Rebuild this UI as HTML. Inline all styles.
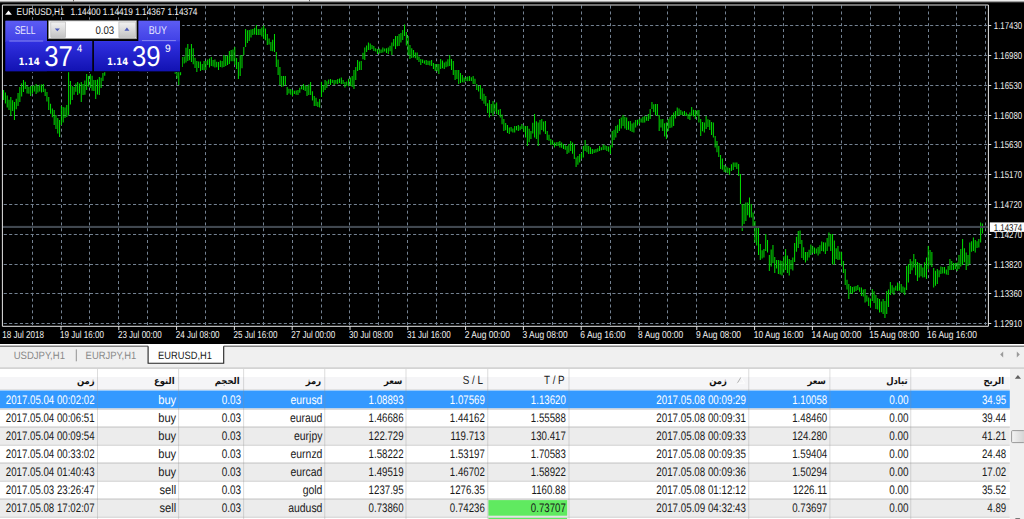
<!DOCTYPE html>
<html><head><meta charset="utf-8"><title>EURUSD,H1</title>
<style>html,body{margin:0;padding:0;background:#fff;overflow:hidden}svg{display:block}text{white-space:pre;text-rendering:geometricPrecision}</style></head><body>
<svg width="1024" height="519" viewBox="0 0 1024 519">
<defs>
<linearGradient id="gb" gradientUnits="userSpaceOnUse" x1="0" y1="20.8" x2="0" y2="71.2"><stop offset="0" stop-color="#5c5cf4"/><stop offset="0.39" stop-color="#4242e6"/><stop offset="0.42" stop-color="#3030e0"/><stop offset="1" stop-color="#1212b2"/></linearGradient>
<linearGradient id="gs" x1="0" y1="0" x2="0" y2="1"><stop offset="0" stop-color="#f2f2f2"/><stop offset="1" stop-color="#c4c4c4"/></linearGradient>
<linearGradient id="gt" x1="0" y1="0" x2="1" y2="0"><stop offset="0" stop-color="#f4f4f4"/><stop offset="1" stop-color="#d4d4d4"/></linearGradient>
</defs>
<rect x="0" y="0" width="1024" height="519" fill="#ffffff"/>
<rect x="0" y="1" width="1024" height="343" fill="#000"/>
<rect x="0" y="0" width="1024" height="1.1" fill="#ececec"/>
<rect x="0" y="1" width="1024" height="1" fill="#a0a0a0"/>
<rect x="0" y="2" width="1024" height="1" fill="#303030"/>
<rect x="73" y="0" width="1" height="1.4" fill="#666"/>
<rect x="309" y="0" width="1" height="1.4" fill="#666"/>
<g stroke="#748292" stroke-width="1" fill="none">
<path stroke-dasharray="3 2.86" d="M32.5 5.6V326"/>
<path stroke-dasharray="3 2.86" d="M61.5 5.6V326"/>
<path stroke-dasharray="3 2.86" d="M89.5 5.6V326"/>
<path stroke-dasharray="3 2.86" d="M118.5 5.6V326"/>
<path stroke-dasharray="3 2.86" d="M147.5 5.6V326"/>
<path stroke-dasharray="3 2.86" d="M176.5 5.6V326"/>
<path stroke-dasharray="3 2.86" d="M205.5 5.6V326"/>
<path stroke-dasharray="3 2.86" d="M234.5 5.6V326"/>
<path stroke-dasharray="3 2.86" d="M263.5 5.6V326"/>
<path stroke-dasharray="3 2.86" d="M292.5 5.6V326"/>
<path stroke-dasharray="3 2.86" d="M321.5 5.6V326"/>
<path stroke-dasharray="3 2.86" d="M349.5 5.6V326"/>
<path stroke-dasharray="3 2.86" d="M378.5 5.6V326"/>
<path stroke-dasharray="3 2.86" d="M407.5 5.6V326"/>
<path stroke-dasharray="3 2.86" d="M436.5 5.6V326"/>
<path stroke-dasharray="3 2.86" d="M465.5 5.6V326"/>
<path stroke-dasharray="3 2.86" d="M494.5 5.6V326"/>
<path stroke-dasharray="3 2.86" d="M523.5 5.6V326"/>
<path stroke-dasharray="3 2.86" d="M552.5 5.6V326"/>
<path stroke-dasharray="3 2.86" d="M581.5 5.6V326"/>
<path stroke-dasharray="3 2.86" d="M610.5 5.6V326"/>
<path stroke-dasharray="3 2.86" d="M639.5 5.6V326"/>
<path stroke-dasharray="3 2.86" d="M667.5 5.6V326"/>
<path stroke-dasharray="3 2.86" d="M696.5 5.6V326"/>
<path stroke-dasharray="3 2.86" d="M725.5 5.6V326"/>
<path stroke-dasharray="3 2.86" d="M754.5 5.6V326"/>
<path stroke-dasharray="3 2.86" d="M783.5 5.6V326"/>
<path stroke-dasharray="3 2.86" d="M812.5 5.6V326"/>
<path stroke-dasharray="3 2.86" d="M841.5 5.6V326"/>
<path stroke-dasharray="3 2.86" d="M870.5 5.6V326"/>
<path stroke-dasharray="3 2.86" d="M899.5 5.6V326"/>
<path stroke-dasharray="3 2.86" d="M928.5 5.6V326"/>
<path stroke-dasharray="3 2.86" d="M956.5 5.6V326"/>
<path stroke-dasharray="3 2.86" d="M985.5 5.6V326"/>
<path stroke-dasharray="3.1 2.286" d="M3.75 25.5H988"/>
<path stroke-dasharray="3.1 2.286" d="M3.75 55.5H988"/>
<path stroke-dasharray="3.1 2.286" d="M3.75 85.5H988"/>
<path stroke-dasharray="3.1 2.286" d="M3.75 115.5H988"/>
<path stroke-dasharray="3.1 2.286" d="M3.75 144.5H988"/>
<path stroke-dasharray="3.1 2.286" d="M3.75 174.5H988"/>
<path stroke-dasharray="3.1 2.286" d="M3.75 204.5H988"/>
<path stroke-dasharray="3.1 2.286" d="M3.75 234.5H988"/>
<path stroke-dasharray="3.1 2.286" d="M3.75 264.5H988"/>
<path stroke-dasharray="3.1 2.286" d="M3.75 293.5H988"/>
<path stroke-dasharray="3.1 2.286" d="M3.75 323.5H988"/>
</g>
<path d="M3.60 90.0V100.0M5.41 92.6V103.6M7.21 95.4V107.6M9.02 99.8V110.1M10.82 97.0V116.0M12.63 100.3V111.1M14.44 102.0V120.0M16.24 98.8V109.2M18.05 93.1V106.1M19.85 87.0V102.0M21.66 83.3V96.5M23.47 80.0V92.0M25.27 81.8V88.9M27.08 85.9V93.4M28.88 87.1V93.7M30.69 86.0V96.0M32.50 85.4V93.4M34.30 85.6V91.4M36.11 84.0V94.0M37.91 85.8V92.5M39.72 84.7V91.6M41.53 84.6V92.5M43.33 84.0V92.0M45.14 88.7V95.9M46.94 92.0V101.6M48.75 97.0V110.0M50.56 103.7V113.8M52.36 108.4V117.3M54.17 110.0V125.0M55.97 114.9V129.0M57.78 117.9V133.4M59.59 120.0V137.0M61.39 106.0V125.0M63.20 106.9V122.5M65.00 107.4V117.9M66.81 105.0V117.0M68.62 72.0V115.0M70.42 81.1V104.5M72.23 86.0V100.0M74.03 87.1V94.7M75.84 83.5V91.8M77.65 82.0V95.0M79.45 83.6V93.6M81.26 82.0V102.0M83.06 83.9V95.1M84.87 80.6V94.7M86.68 74.0V90.0M88.48 76.1V86.4M90.29 74.0V88.0M92.09 75.7V90.8M93.90 79.9V91.0M95.71 80.0V99.0M97.51 79.4V94.5M99.32 77.0V95.0M101.12 77.8V88.0M102.93 73.0V81.0M104.74 69.6V75.8M106.54 63.9V70.7M108.35 60.0V67.7M110.15 58.6V66.5M111.96 57.6V63.9M113.77 57.5V62.8M115.57 54.0V59.3M117.38 52.7V58.9M119.18 50.8V57.8M120.99 50.4V56.0M122.80 50.8V57.0M124.60 52.9V59.0M126.41 48.7V57.7M128.21 49.3V56.7M130.02 47.9V56.1M131.83 47.8V58.8M133.63 48.0V57.1M135.44 46.7V53.9M137.24 46.7V55.5M139.05 45.4V57.3M140.86 50.6V57.9M142.66 46.1V56.2M144.47 46.2V56.3M146.27 49.2V59.2M148.08 47.6V59.4M149.89 49.0V57.3M151.69 51.5V59.3M153.50 50.4V60.1M155.30 49.6V58.2M157.11 50.3V61.4M158.92 50.4V61.6M160.72 51.2V62.1M162.53 53.8V61.3M164.33 53.0V61.0M166.14 55.4V61.6M167.95 57.8V64.9M169.75 56.6V66.8M171.56 58.0V67.8M173.36 61.3V71.7M175.17 66.3V73.8M176.98 70.5V78.5M178.78 72.0V85.0M180.59 64.6V75.3M182.39 57.0V67.0M184.20 56.4V63.5M186.01 47.7V62.4M187.81 44.0V61.0M189.62 49.1V60.2M191.42 44.0V62.0M193.23 48.3V64.3M195.04 57.8V67.9M196.84 61.0V72.0M198.65 61.6V68.1M200.45 61.4V71.1M202.26 64.1V70.0M204.07 61.1V70.2M205.87 61.0V70.0M207.68 59.5V65.0M209.48 58.5V67.4M211.29 57.0V66.0M213.10 59.9V66.4M214.90 59.6V67.4M216.71 61.7V67.2M218.51 62.0V70.0M220.32 60.6V67.0M222.13 61.0V67.6M223.93 55.0V67.0M225.74 55.9V65.9M227.54 55.6V65.0M229.35 51.0V64.0M231.16 50.1V61.3M232.96 49.4V61.3M234.77 47.0V65.0M236.57 58.0V68.9M238.38 62.0V79.0M240.19 55.0V76.0M241.99 55.0V68.3M243.80 47.0V55.0M245.60 29.0V47.0M247.41 30.3V43.0M249.22 30.0V41.0M251.02 29.6V37.4M252.83 29.0V35.0M254.63 27.8V34.4M256.44 25.0V35.0M258.25 29.0V34.9M260.05 29.0V35.0M261.86 27.6V36.5M263.66 25.5V39.0M265.47 28.4V40.2M267.28 34.0V45.0M269.08 38.6V44.5M270.89 42.0V51.0M272.69 39.7V51.3M274.50 34.0V52.0M276.31 52.0V67.0M278.11 59.5V75.0M279.92 67.0V85.0M281.72 76.0V87.0M283.53 76.0V86.2M285.34 76.0V85.0M287.14 87.0V95.0M288.95 88.7V93.5M290.75 89.0V94.8M292.56 90.0V96.0M294.37 90.8V94.0M296.17 90.5V94.8M297.98 90.0V95.0M299.78 87.8V92.7M301.59 85.7V89.2M303.40 84.0V90.0M305.20 85.4V90.9M307.01 86.0V96.0M308.81 84.5V94.9M310.62 82.0V95.0M312.43 91.2V100.4M314.23 96.0V106.0M316.04 97.8V105.9M317.84 101.8V106.9M319.65 99.0V107.5M321.46 82.0V97.0M323.26 85.3V92.3M325.07 80.0V90.0M326.87 81.2V88.0M328.68 79.6V84.3M330.49 79.0V85.0M332.29 79.8V83.1M334.10 80.0V85.0M335.90 80.1V83.7M337.71 79.0V84.1M339.52 78.4V83.1M341.32 77.5V84.0M343.13 79.9V83.9M344.93 82.0V87.5M346.74 81.6V85.7M348.55 78.8V86.2M350.35 77.5V86.0M352.16 76.1V87.1M353.96 70.0V89.0M355.77 67.0V79.9M357.58 60.0V71.0M359.38 61.4V70.0M361.19 61.0V70.0M362.99 52.7V59.2M364.80 47.5V60.0M366.61 45.4V52.0M368.41 42.5V50.0M370.22 43.6V50.1M372.02 45.1V49.1M373.83 46.0V51.0M375.64 48.2V51.4M377.44 49.0V54.0M379.25 48.5V53.4M381.05 49.6V52.9M382.86 47.5V52.5M384.67 48.5V51.6M386.47 48.2V53.0M388.28 47.5V54.0M390.08 45.8V51.3M391.89 42.5V55.0M393.70 38.9V46.2M395.50 36.0V49.0M397.31 36.1V46.2M399.11 34.0V46.0M400.92 33.0V42.5M402.73 30.0V40.0M404.53 24.5V36.0M406.34 31.9V45.5M408.14 36.0V55.0M409.95 45.0V59.0M411.76 48.3V58.1M413.56 50.0V57.5M415.37 52.4V58.2M417.17 52.5V60.0M418.98 56.4V62.0M420.79 59.0V65.0M422.59 59.4V63.1M424.40 60.4V63.7M426.20 60.0V65.0M428.01 60.7V65.0M429.82 60.7V65.5M431.62 60.0V66.0M433.43 62.9V68.9M435.23 64.0V71.0M437.04 64.1V71.3M438.85 64.0V74.0M440.65 59.0V69.0M442.46 60.5V68.2M444.26 62.5V69.0M446.07 61.4V67.2M447.88 59.2V66.4M449.68 55.0V66.0M451.49 59.1V70.0M453.29 61.0V75.0M455.10 70.0V80.0M456.91 70.0V78.9M458.71 70.0V84.0M460.52 72.9V83.1M462.32 75.1V82.2M464.13 77.5V82.5M465.94 77.1V80.9M467.74 76.4V81.2M469.55 76.0V81.0M471.35 77.3V80.9M473.16 76.0V84.0M474.97 78.7V84.3M476.77 84.0V90.0M478.58 86.1V91.5M480.38 85.0V99.0M482.19 88.3V100.8M484.00 93.7V103.8M485.80 96.0V106.0M487.61 103.2V113.0M489.41 100.0V117.5M491.22 104.1V112.9M493.03 101.0V116.0M494.83 103.7V111.5M496.64 102.5V114.0M498.44 109.7V115.1M500.25 109.0V117.5M502.06 114.4V124.3M503.86 119.0V131.0M505.67 123.0V130.3M507.47 124.9V133.1M509.28 127.5V134.0M511.09 127.0V131.4M512.89 128.5V132.4M514.70 126.0V132.5M516.50 126.1V130.2M518.31 125.0V131.0M520.12 126.2V130.3M521.92 124.0V129.0M523.73 125.8V131.9M525.53 126.0V137.5M527.34 126.0V146.0M529.15 128.7V142.3M530.95 131.0V139.0M532.76 122.7V133.4M534.56 114.0V137.5M536.37 121.2V139.1M538.18 122.5V146.0M539.98 120.1V134.5M541.79 119.0V130.0M543.59 121.5V131.5M545.40 121.0V134.0M547.21 131.0V140.0M549.01 134.8V140.8M550.82 139.0V145.0M552.62 140.6V144.8M554.43 142.5V147.5M556.24 142.3V146.1M558.04 142.1V146.0M559.85 141.0V147.5M561.65 142.5V147.7M563.46 144.0V149.0M565.27 145.3V149.7M567.07 146.0V154.0M568.88 144.0V152.7M570.68 141.0V151.0M572.49 142.4V153.8M574.30 144.0V159.0M576.10 157.5V167.0M577.91 156.0V164.8M579.71 154.0V162.5M581.52 153.0V158.7M583.33 146.0V157.5M585.13 140.0V151.0M586.94 145.3V152.3M588.74 146.0V154.0M590.55 147.3V153.9M592.36 149.0V154.0M594.16 149.6V153.0M595.97 149.0V152.5M597.77 148.2V151.7M599.58 146.0V151.0M601.39 147.2V150.2M603.19 144.5V150.0M605.00 145.2V149.7M606.80 146.0V151.0M608.61 146.4V151.8M610.42 145.0V154.0M612.22 131.0V147.5M614.03 129.7V140.1M615.83 126.0V137.5M617.64 124.8V132.9M619.45 119.0V131.0M621.25 117.6V128.6M623.06 115.0V126.0M624.86 116.7V128.4M626.67 117.5V130.0M628.48 121.3V129.8M630.28 121.0V131.0M632.09 123.4V131.9M633.89 122.5V132.5M635.70 120.0V127.5M637.51 119.8V125.4M639.31 119.0V124.0M641.12 118.4V122.6M642.92 116.8V122.8M644.73 116.0V122.5M646.54 116.4V120.8M648.34 114.0V121.0M650.15 109.0V119.0M651.95 102.0V109.0M653.76 104.3V112.0M655.57 104.0V115.0M657.37 104.0V116.0M659.18 115.0V131.0M660.98 119.3V127.4M662.79 119.0V131.0M664.60 123.3V136.6M666.40 122.5V139.0M668.21 119.0V131.0M670.01 117.0V127.9M671.82 115.0V127.5M673.63 112.5V126.0M675.43 111.0V118.4M677.24 107.5V116.0M679.04 108.6V115.4M680.85 110.0V115.0M682.66 111.6V115.2M684.46 111.0V116.0M686.27 112.6V116.0M688.07 113.9V118.9M689.88 112.5V120.0M691.69 107.0V116.0M693.49 109.8V116.4M695.30 110.0V119.0M697.10 110.3V116.1M698.91 110.0V122.5M700.72 119.0V136.0M702.52 121.9V131.3M704.33 122.5V132.5M706.13 116.0V129.0M707.94 119.2V127.0M709.75 120.0V130.0M711.55 122.0V134.9M713.36 122.5V137.5M715.16 136.0V147.5M716.97 141.1V152.2M718.78 146.0V157.0M720.58 155.0V169.0M722.39 158.5V169.7M724.19 165.0V172.0M726.00 166.2V172.6M727.81 167.5V173.3M729.61 168.0V175.0M731.42 164.3V170.9M733.22 162.5V170.0M735.03 162.6V167.1M736.84 162.5V169.0M738.64 164.0V176.0M740.45 174.0V204.0M742.25 204.0V231.0M744.06 204.0V224.0M745.87 202.5V221.0M747.67 202.5V215.2M749.48 197.5V217.5M751.28 204.0V217.5M753.09 212.5V226.0M754.90 221.0V242.5M756.70 225.9V245.5M758.51 227.5V255.0M760.31 244.0V260.0M762.12 250.3V258.5M763.93 249.0V257.5M765.73 234.0V251.0M767.54 240.0V252.5M769.34 255.0V271.0M771.15 249.5V266.5M772.96 245.0V263.0M774.76 257.0V273.0M776.57 259.9V268.6M778.37 260.0V274.0M780.18 260.4V274.4M781.99 261.0V275.5M783.79 256.3V272.6M785.60 249.0V270.0M787.40 255.4V273.1M789.21 259.0V275.5M791.02 259.9V269.2M792.82 257.5V270.5M794.63 243.0V262.0M796.43 236.7V251.7M798.24 231.0V248.0M800.05 230.5V244.0M801.85 240.0V258.0M803.66 247.3V259.9M805.46 252.0V262.5M807.27 252.0V260.5M809.08 249.8V257.5M810.88 244.5V255.0M812.69 246.2V252.9M814.49 247.5V254.0M816.30 248.6V253.6M818.11 247.0V255.5M819.91 245.3V253.7M821.72 241.5V251.0M823.52 242.3V251.5M825.33 242.5V254.0M827.14 238.0V251.0M828.94 232.5V246.5M830.75 234.1V251.0M832.55 234.0V264.5M834.36 240.5V264.5M836.17 248.3V259.1M837.97 246.0V260.0M839.78 251.4V259.8M841.58 252.0V265.5M843.39 261.0V273.0M845.20 269.0V285.0M847.00 279.7V289.5M848.81 284.0V299.0M850.61 286.1V293.6M852.42 287.0V294.0M854.23 286.5V292.0M856.03 286.0V291.0M857.84 285.0V290.0M859.64 287.2V291.7M861.45 287.5V296.0M863.26 289.6V296.5M865.06 289.0V302.5M866.87 295.3V301.6M868.67 297.5V306.0M870.48 299.0V307.5M872.29 289.0V301.0M874.09 291.3V303.1M875.90 295.0V309.0M877.70 298.0V309.4M879.51 299.0V312.5M881.32 301.5V312.2M883.12 299.0V314.0M884.93 301.0V318.0M886.73 291.0V314.0M888.54 289.5V307.0M890.35 282.0V295.0M892.15 285.3V292.9M893.96 287.5V295.0M895.76 285.7V290.6M897.57 282.5V291.0M899.38 283.6V290.7M901.18 284.0V292.5M902.99 286.6V292.7M904.79 287.5V295.0M906.60 266.0V290.0M908.41 264.0V282.5M910.21 259.0V274.0M912.02 261.2V270.2M913.82 254.0V267.5M915.63 259.0V275.2M917.44 262.0V281.0M919.24 263.0V277.5M921.05 264.8V276.3M922.85 267.5V277.5M924.66 262.2V277.2M926.47 257.5V279.0M928.27 246.0V269.0M930.08 250.1V265.2M931.88 252.0V267.0M933.69 268.0V287.5M935.50 270.7V285.7M937.30 269.0V284.0M939.11 270.3V277.2M940.91 266.5V274.0M942.72 267.0V273.5M944.53 267.0V273.5M946.33 269.6V274.5M948.14 266.0V275.0M949.94 259.0V270.0M951.75 261.0V270.0M953.56 263.0V270.0M955.36 263.1V268.9M957.17 262.5V271.0M958.97 255.0V269.0M960.78 248.9V266.6M962.59 239.0V265.0M964.39 248.2V262.2M966.20 252.5V270.0M968.00 255.0V266.0M969.81 242.5V264.0M971.62 241.3V251.8M973.42 237.5V251.0M975.23 240.0V252.5M977.03 241.3V247.9M978.84 239.0V247.5M980.65 222.5V242.5M982.45 223.5V233.6" stroke="#00dc00" stroke-width="1.02" fill="none"/>
<rect x="2.5" y="225.9" width="985.5" height="2.1" fill="#40474f"/>
<path d="M2.4 326.3V5H988.4V326.3Z" stroke="#e6e6e6" stroke-width="1" fill="none"/>
<path d="M988 25.5H991.3" stroke="#e0e0e0" stroke-width="1"/>
<path d="M988 55.5H991.3" stroke="#e0e0e0" stroke-width="1"/>
<path d="M988 85.5H991.3" stroke="#e0e0e0" stroke-width="1"/>
<path d="M988 115.5H991.3" stroke="#e0e0e0" stroke-width="1"/>
<path d="M988 144.5H991.3" stroke="#e0e0e0" stroke-width="1"/>
<path d="M988 174.5H991.3" stroke="#e0e0e0" stroke-width="1"/>
<path d="M988 204.5H991.3" stroke="#e0e0e0" stroke-width="1"/>
<path d="M988 234.5H991.3" stroke="#e0e0e0" stroke-width="1"/>
<path d="M988 264.5H991.3" stroke="#e0e0e0" stroke-width="1"/>
<path d="M988 293.5H991.3" stroke="#e0e0e0" stroke-width="1"/>
<path d="M988 323.5H991.3" stroke="#e0e0e0" stroke-width="1"/>
<text x="0.0" y="338" font-family="Liberation Sans, sans-serif" font-size="10.1" fill="#f0f0f0" transform="translate(2.3 0) scale(0.798 1)">18 Jul 2018</text>
<path d="M61.0 326V330" stroke="#e0e0e0" stroke-width="1"/>
<text x="0.0" y="338" font-family="Liberation Sans, sans-serif" font-size="10.1" fill="#f0f0f0" transform="translate(60.1 0) scale(0.798 1)">19 Jul 16:00</text>
<path d="M118.8 326V330" stroke="#e0e0e0" stroke-width="1"/>
<text x="0.0" y="338" font-family="Liberation Sans, sans-serif" font-size="10.1" fill="#f0f0f0" transform="translate(117.9 0) scale(0.798 1)">23 Jul 00:00</text>
<path d="M176.6 326V330" stroke="#e0e0e0" stroke-width="1"/>
<text x="0.0" y="338" font-family="Liberation Sans, sans-serif" font-size="10.1" fill="#f0f0f0" transform="translate(175.7 0) scale(0.798 1)">24 Jul 08:00</text>
<path d="M234.4 326V330" stroke="#e0e0e0" stroke-width="1"/>
<text x="0.0" y="338" font-family="Liberation Sans, sans-serif" font-size="10.1" fill="#f0f0f0" transform="translate(233.5 0) scale(0.798 1)">25 Jul 16:00</text>
<path d="M292.2 326V330" stroke="#e0e0e0" stroke-width="1"/>
<text x="0.0" y="338" font-family="Liberation Sans, sans-serif" font-size="10.1" fill="#f0f0f0" transform="translate(291.3 0) scale(0.798 1)">27 Jul 00:00</text>
<path d="M350.0 326V330" stroke="#e0e0e0" stroke-width="1"/>
<text x="0.0" y="338" font-family="Liberation Sans, sans-serif" font-size="10.1" fill="#f0f0f0" transform="translate(349.1 0) scale(0.798 1)">30 Jul 08:00</text>
<path d="M407.8 326V330" stroke="#e0e0e0" stroke-width="1"/>
<text x="0.0" y="338" font-family="Liberation Sans, sans-serif" font-size="10.1" fill="#f0f0f0" transform="translate(406.9 0) scale(0.798 1)">31 Jul 16:00</text>
<path d="M465.6 326V330" stroke="#e0e0e0" stroke-width="1"/>
<text x="0.0" y="338" font-family="Liberation Sans, sans-serif" font-size="10.1" fill="#f0f0f0" transform="translate(464.7 0) scale(0.838 1)">2 Aug 00:00</text>
<path d="M523.4 326V330" stroke="#e0e0e0" stroke-width="1"/>
<text x="0.0" y="338" font-family="Liberation Sans, sans-serif" font-size="10.1" fill="#f0f0f0" transform="translate(522.5 0) scale(0.838 1)">3 Aug 08:00</text>
<path d="M581.2 326V330" stroke="#e0e0e0" stroke-width="1"/>
<text x="0.0" y="338" font-family="Liberation Sans, sans-serif" font-size="10.1" fill="#f0f0f0" transform="translate(580.3 0) scale(0.838 1)">6 Aug 16:00</text>
<path d="M639.0 326V330" stroke="#e0e0e0" stroke-width="1"/>
<text x="0.0" y="338" font-family="Liberation Sans, sans-serif" font-size="10.1" fill="#f0f0f0" transform="translate(638.1 0) scale(0.838 1)">8 Aug 00:00</text>
<path d="M696.8 326V330" stroke="#e0e0e0" stroke-width="1"/>
<text x="0.0" y="338" font-family="Liberation Sans, sans-serif" font-size="10.1" fill="#f0f0f0" transform="translate(695.9 0) scale(0.838 1)">9 Aug 08:00</text>
<path d="M754.6 326V330" stroke="#e0e0e0" stroke-width="1"/>
<text x="0.0" y="338" font-family="Liberation Sans, sans-serif" font-size="10.1" fill="#f0f0f0" transform="translate(753.7 0) scale(0.838 1)">10 Aug 16:00</text>
<path d="M812.4 326V330" stroke="#e0e0e0" stroke-width="1"/>
<text x="0.0" y="338" font-family="Liberation Sans, sans-serif" font-size="10.1" fill="#f0f0f0" transform="translate(811.5 0) scale(0.838 1)">14 Aug 00:00</text>
<path d="M870.2 326V330" stroke="#e0e0e0" stroke-width="1"/>
<text x="0.0" y="338" font-family="Liberation Sans, sans-serif" font-size="10.1" fill="#f0f0f0" transform="translate(869.3 0) scale(0.838 1)">15 Aug 08:00</text>
<path d="M928.0 326V330" stroke="#e0e0e0" stroke-width="1"/>
<text x="0.0" y="338" font-family="Liberation Sans, sans-serif" font-size="10.1" fill="#f0f0f0" transform="translate(927.1 0) scale(0.838 1)">16 Aug 16:00</text>
<text x="993.8" y="29.0" font-family="Liberation Sans, sans-serif" font-size="10" fill="#f0f0f0" textLength="28.4" lengthAdjust="spacingAndGlyphs">1.17430</text>
<text x="993.8" y="59.0" font-family="Liberation Sans, sans-serif" font-size="10" fill="#f0f0f0" textLength="28.4" lengthAdjust="spacingAndGlyphs">1.16980</text>
<text x="993.8" y="89.0" font-family="Liberation Sans, sans-serif" font-size="10" fill="#f0f0f0" textLength="28.4" lengthAdjust="spacingAndGlyphs">1.16530</text>
<text x="993.8" y="119.0" font-family="Liberation Sans, sans-serif" font-size="10" fill="#f0f0f0" textLength="28.4" lengthAdjust="spacingAndGlyphs">1.16080</text>
<text x="993.8" y="148.0" font-family="Liberation Sans, sans-serif" font-size="10" fill="#f0f0f0" textLength="28.4" lengthAdjust="spacingAndGlyphs">1.15630</text>
<text x="993.8" y="178.0" font-family="Liberation Sans, sans-serif" font-size="10" fill="#f0f0f0" textLength="28.4" lengthAdjust="spacingAndGlyphs">1.15170</text>
<text x="993.8" y="208.0" font-family="Liberation Sans, sans-serif" font-size="10" fill="#f0f0f0" textLength="28.4" lengthAdjust="spacingAndGlyphs">1.14720</text>
<text x="993.8" y="238.0" font-family="Liberation Sans, sans-serif" font-size="10" fill="#f0f0f0" textLength="28.4" lengthAdjust="spacingAndGlyphs">1.14270</text>
<text x="993.8" y="268.0" font-family="Liberation Sans, sans-serif" font-size="10" fill="#f0f0f0" textLength="28.4" lengthAdjust="spacingAndGlyphs">1.13820</text>
<text x="993.8" y="297.0" font-family="Liberation Sans, sans-serif" font-size="10" fill="#f0f0f0" textLength="28.4" lengthAdjust="spacingAndGlyphs">1.13360</text>
<text x="993.8" y="327.0" font-family="Liberation Sans, sans-serif" font-size="10" fill="#f0f0f0" textLength="28.4" lengthAdjust="spacingAndGlyphs">1.12910</text>
<rect x="989.8" y="222.4" width="34.2" height="9.5" fill="#fff"/>
<text x="993.8" y="230.6" font-family="Liberation Sans, sans-serif" font-size="10" fill="#111" textLength="28.4" lengthAdjust="spacingAndGlyphs">1.14374</text>
<path d="M5.1 14.8L8.5 10.5L11.9 14.8Z" fill="#fff"/>
<text x="16.6" y="15.3" font-family="Liberation Sans, sans-serif" font-size="9.8" fill="#f2f2f2" textLength="48" lengthAdjust="spacingAndGlyphs">EURUSD,H1</text>
<text x="70.6" y="15.3" font-family="Liberation Sans, sans-serif" font-size="9.8" fill="#f2f2f2" textLength="126.8" lengthAdjust="spacingAndGlyphs">1.14400 1.14419 1.14367 1.14374</text>
<rect x="3" y="19.6" width="179.2" height="52.6" fill="#000"/>
<rect x="5.5" y="20.8" width="41.4" height="21" fill="#5656ee"/>
<rect x="138.6" y="20.8" width="41.4" height="21" fill="#5656ee"/>
<rect x="5.5" y="20.8" width="41.4" height="50.4" fill="url(#gb)"/>
<rect x="138.6" y="20.8" width="41.4" height="50.4" fill="url(#gb)"/>
<rect x="5.5" y="41" width="86.8" height="30.2" fill="url(#gb)"/>
<rect x="93.9" y="41" width="86.1" height="30.2" fill="url(#gb)"/>
<path d="M9.3 41H43.2" stroke="#8585f0" stroke-width="1"/>
<path d="M142 40.6H175.9" stroke="#8585f0" stroke-width="1"/>
<text x="14.7" y="34" font-family="Liberation Sans, sans-serif" font-size="11.3" fill="#e8e8ff" textLength="20.8" lengthAdjust="spacingAndGlyphs">SELL</text>
<text x="148.7" y="33.8" font-family="Liberation Sans, sans-serif" font-size="11.3" fill="#e8e8ff" textLength="18.3" lengthAdjust="spacingAndGlyphs">BUY</text>
<rect x="48.7" y="20.8" width="87.7" height="17.9" fill="#fff" stroke="#999" stroke-width="0.8"/>
<rect x="50.8" y="22" width="14.7" height="15.3" fill="url(#gs)" stroke="#b0b0b0" stroke-width="0.6"/>
<rect x="118.9" y="22" width="16.6" height="15.3" fill="url(#gs)" stroke="#b0b0b0" stroke-width="0.6"/>
<path d="M54.8 28.4H59.9L57.35 31.2Z" fill="#4a5ab8"/>
<path d="M124.4 30.7H129.4L126.9 27.6Z" fill="#4a5ab8"/>
<text x="95.4" y="33.5" font-family="Liberation Sans, sans-serif" font-size="11" fill="#222" textLength="18.8" lengthAdjust="spacingAndGlyphs">0.03</text>
<text x="18.5" y="65.2" font-family="DejaVu Sans, Liberation Sans, sans-serif" font-weight="bold" font-size="9.9" fill="#fff" textLength="21.4" lengthAdjust="spacingAndGlyphs">1.14</text>
<text x="107.1" y="65.2" font-family="DejaVu Sans, Liberation Sans, sans-serif" font-weight="bold" font-size="9.9" fill="#fff" textLength="21.2" lengthAdjust="spacingAndGlyphs">1.14</text>
<text x="44.3" y="65.8" font-family="Liberation Sans, sans-serif" font-size="28.6" fill="#fff" textLength="28.6" lengthAdjust="spacingAndGlyphs">37</text>
<text x="132" y="65.8" font-family="Liberation Sans, sans-serif" font-size="28.6" fill="#fff" textLength="28.6" lengthAdjust="spacingAndGlyphs">39</text>
<text x="76.7" y="52.4" font-family="Liberation Sans, sans-serif" font-size="10.6" fill="#fff" textLength="5.5" lengthAdjust="spacingAndGlyphs">4</text>
<text x="164.9" y="52.4" font-family="Liberation Sans, sans-serif" font-size="10.6" fill="#fff" textLength="5.7" lengthAdjust="spacingAndGlyphs">9</text>
<rect x="0" y="344" width="1024" height="3" fill="#fff"/>
<rect x="0" y="346" width="1024" height="22" fill="#f0f0f0"/>
<rect x="0" y="345.6" width="1024" height="1.2" fill="#6a6a6a"/>
<rect x="0" y="367.6" width="1024" height="1" fill="#b8b8b8"/>
<path d="M148.1 344V363.2H223.7V344Z" fill="#fff"/>
<path d="M148.1 346.2V363.2H223.7V346.2" fill="none" stroke="#222" stroke-width="1.1"/>
<text x="13.7" y="358.7" font-family="Liberation Sans, sans-serif" font-size="10.6" fill="#888" textLength="51.3" lengthAdjust="spacingAndGlyphs">USDJPY,H1</text>
<path d="M76.3 349.4V361.3" stroke="#888" stroke-width="0.9"/>
<text x="85.6" y="358.7" font-family="Liberation Sans, sans-serif" font-size="10.6" fill="#888" textLength="50.6" lengthAdjust="spacingAndGlyphs">EURJPY,H1</text>
<text x="158.1" y="358.7" font-family="Liberation Sans, sans-serif" font-size="10.6" fill="#1a1a1a" textLength="53.8" lengthAdjust="spacingAndGlyphs">EURUSD,H1</text>
<path d="M1003.2 351.6V357.4L1000.2 354.5Z" fill="#9a9a9a"/>
<path d="M1016.8 351.6V357.4L1019.8 354.5Z" fill="#9a9a9a"/>
<rect x="0" y="377" width="1009.8" height="12.5" fill="#f5f5f7"/>
<rect x="0" y="389.2" width="1009.8" height="1" fill="#dcdcdc"/>
<rect x="0" y="390.5" width="1009.8" height="18.2" fill="#3399ff"/>
<text transform="translate(94.60 404.0) scale(0.781 1)" text-anchor="end" font-family="Liberation Sans, sans-serif" font-size="12.4" fill="#ffffff">2017.05.04 00:02:02</text>
<text transform="translate(176.20 404.0) scale(0.900 1)" text-anchor="end" font-family="Liberation Sans, sans-serif" font-size="12.4" fill="#ffffff">buy</text>
<text transform="translate(241.00 404.0) scale(0.803 1)" text-anchor="end" font-family="Liberation Sans, sans-serif" font-size="12.4" fill="#ffffff">0.03</text>
<text transform="translate(322.40 404.0) scale(0.842 1)" text-anchor="end" font-family="Liberation Sans, sans-serif" font-size="12.4" fill="#ffffff">eurusd</text>
<text transform="translate(403.60 404.0) scale(0.781 1)" text-anchor="end" font-family="Liberation Sans, sans-serif" font-size="12.4" fill="#ffffff">1.08893</text>
<text transform="translate(484.80 404.0) scale(0.781 1)" text-anchor="end" font-family="Liberation Sans, sans-serif" font-size="12.4" fill="#ffffff">1.07569</text>
<text transform="translate(565.80 404.0) scale(0.781 1)" text-anchor="end" font-family="Liberation Sans, sans-serif" font-size="12.4" fill="#ffffff">1.13620</text>
<text transform="translate(746.00 404.0) scale(0.789 1)" text-anchor="end" font-family="Liberation Sans, sans-serif" font-size="12.4" fill="#ffffff">2017.05.08 00:09:29</text>
<text transform="translate(827.20 404.0) scale(0.781 1)" text-anchor="end" font-family="Liberation Sans, sans-serif" font-size="12.4" fill="#ffffff">1.10058</text>
<text transform="translate(908.60 404.0) scale(0.803 1)" text-anchor="end" font-family="Liberation Sans, sans-serif" font-size="12.4" fill="#ffffff">0.00</text>
<text transform="translate(1006.20 404.0) scale(0.781 1)" text-anchor="end" font-family="Liberation Sans, sans-serif" font-size="12.4" fill="#ffffff">34.95</text>
<rect x="0" y="408.5" width="1009.8" height="18.2" fill="#ffffff"/>
<text transform="translate(94.60 422.0) scale(0.781 1)" text-anchor="end" font-family="Liberation Sans, sans-serif" font-size="12.4" fill="#1a1a1a">2017.05.04 00:06:51</text>
<text transform="translate(176.20 422.0) scale(0.900 1)" text-anchor="end" font-family="Liberation Sans, sans-serif" font-size="12.4" fill="#1a1a1a">buy</text>
<text transform="translate(241.00 422.0) scale(0.803 1)" text-anchor="end" font-family="Liberation Sans, sans-serif" font-size="12.4" fill="#1a1a1a">0.03</text>
<text transform="translate(322.40 422.0) scale(0.842 1)" text-anchor="end" font-family="Liberation Sans, sans-serif" font-size="12.4" fill="#1a1a1a">euraud</text>
<text transform="translate(403.60 422.0) scale(0.781 1)" text-anchor="end" font-family="Liberation Sans, sans-serif" font-size="12.4" fill="#1a1a1a">1.46686</text>
<text transform="translate(484.80 422.0) scale(0.781 1)" text-anchor="end" font-family="Liberation Sans, sans-serif" font-size="12.4" fill="#1a1a1a">1.44162</text>
<text transform="translate(565.80 422.0) scale(0.781 1)" text-anchor="end" font-family="Liberation Sans, sans-serif" font-size="12.4" fill="#1a1a1a">1.55588</text>
<text transform="translate(746.00 422.0) scale(0.789 1)" text-anchor="end" font-family="Liberation Sans, sans-serif" font-size="12.4" fill="#1a1a1a">2017.05.08 00:09:31</text>
<text transform="translate(827.20 422.0) scale(0.781 1)" text-anchor="end" font-family="Liberation Sans, sans-serif" font-size="12.4" fill="#1a1a1a">1.48460</text>
<text transform="translate(908.60 422.0) scale(0.803 1)" text-anchor="end" font-family="Liberation Sans, sans-serif" font-size="12.4" fill="#1a1a1a">0.00</text>
<text transform="translate(1006.20 422.0) scale(0.781 1)" text-anchor="end" font-family="Liberation Sans, sans-serif" font-size="12.4" fill="#1a1a1a">39.44</text>
<rect x="0" y="426.5" width="1009.8" height="18.2" fill="#ececec"/>
<text transform="translate(94.60 440.0) scale(0.781 1)" text-anchor="end" font-family="Liberation Sans, sans-serif" font-size="12.4" fill="#1a1a1a">2017.05.04 00:09:54</text>
<text transform="translate(176.20 440.0) scale(0.900 1)" text-anchor="end" font-family="Liberation Sans, sans-serif" font-size="12.4" fill="#1a1a1a">buy</text>
<text transform="translate(241.00 440.0) scale(0.803 1)" text-anchor="end" font-family="Liberation Sans, sans-serif" font-size="12.4" fill="#1a1a1a">0.03</text>
<text transform="translate(322.40 440.0) scale(0.842 1)" text-anchor="end" font-family="Liberation Sans, sans-serif" font-size="12.4" fill="#1a1a1a">eurjpy</text>
<text transform="translate(403.60 440.0) scale(0.781 1)" text-anchor="end" font-family="Liberation Sans, sans-serif" font-size="12.4" fill="#1a1a1a">122.729</text>
<text transform="translate(484.80 440.0) scale(0.781 1)" text-anchor="end" font-family="Liberation Sans, sans-serif" font-size="12.4" fill="#1a1a1a">119.713</text>
<text transform="translate(565.80 440.0) scale(0.781 1)" text-anchor="end" font-family="Liberation Sans, sans-serif" font-size="12.4" fill="#1a1a1a">130.417</text>
<text transform="translate(746.00 440.0) scale(0.789 1)" text-anchor="end" font-family="Liberation Sans, sans-serif" font-size="12.4" fill="#1a1a1a">2017.05.08 00:09:33</text>
<text transform="translate(827.20 440.0) scale(0.781 1)" text-anchor="end" font-family="Liberation Sans, sans-serif" font-size="12.4" fill="#1a1a1a">124.280</text>
<text transform="translate(908.60 440.0) scale(0.803 1)" text-anchor="end" font-family="Liberation Sans, sans-serif" font-size="12.4" fill="#1a1a1a">0.00</text>
<text transform="translate(1006.20 440.0) scale(0.781 1)" text-anchor="end" font-family="Liberation Sans, sans-serif" font-size="12.4" fill="#1a1a1a">41.21</text>
<rect x="0" y="444.5" width="1009.8" height="18.2" fill="#ffffff"/>
<text transform="translate(94.60 458.0) scale(0.781 1)" text-anchor="end" font-family="Liberation Sans, sans-serif" font-size="12.4" fill="#1a1a1a">2017.05.04 00:33:02</text>
<text transform="translate(176.20 458.0) scale(0.900 1)" text-anchor="end" font-family="Liberation Sans, sans-serif" font-size="12.4" fill="#1a1a1a">buy</text>
<text transform="translate(241.00 458.0) scale(0.803 1)" text-anchor="end" font-family="Liberation Sans, sans-serif" font-size="12.4" fill="#1a1a1a">0.03</text>
<text transform="translate(322.40 458.0) scale(0.842 1)" text-anchor="end" font-family="Liberation Sans, sans-serif" font-size="12.4" fill="#1a1a1a">eurnzd</text>
<text transform="translate(403.60 458.0) scale(0.781 1)" text-anchor="end" font-family="Liberation Sans, sans-serif" font-size="12.4" fill="#1a1a1a">1.58222</text>
<text transform="translate(484.80 458.0) scale(0.781 1)" text-anchor="end" font-family="Liberation Sans, sans-serif" font-size="12.4" fill="#1a1a1a">1.53197</text>
<text transform="translate(565.80 458.0) scale(0.781 1)" text-anchor="end" font-family="Liberation Sans, sans-serif" font-size="12.4" fill="#1a1a1a">1.70583</text>
<text transform="translate(746.00 458.0) scale(0.789 1)" text-anchor="end" font-family="Liberation Sans, sans-serif" font-size="12.4" fill="#1a1a1a">2017.05.08 00:09:35</text>
<text transform="translate(827.20 458.0) scale(0.781 1)" text-anchor="end" font-family="Liberation Sans, sans-serif" font-size="12.4" fill="#1a1a1a">1.59404</text>
<text transform="translate(908.60 458.0) scale(0.803 1)" text-anchor="end" font-family="Liberation Sans, sans-serif" font-size="12.4" fill="#1a1a1a">0.00</text>
<text transform="translate(1006.20 458.0) scale(0.781 1)" text-anchor="end" font-family="Liberation Sans, sans-serif" font-size="12.4" fill="#1a1a1a">24.48</text>
<rect x="0" y="462.5" width="1009.8" height="18.2" fill="#ececec"/>
<text transform="translate(94.60 476.0) scale(0.781 1)" text-anchor="end" font-family="Liberation Sans, sans-serif" font-size="12.4" fill="#1a1a1a">2017.05.04 01:40:43</text>
<text transform="translate(176.20 476.0) scale(0.900 1)" text-anchor="end" font-family="Liberation Sans, sans-serif" font-size="12.4" fill="#1a1a1a">buy</text>
<text transform="translate(241.00 476.0) scale(0.803 1)" text-anchor="end" font-family="Liberation Sans, sans-serif" font-size="12.4" fill="#1a1a1a">0.03</text>
<text transform="translate(322.40 476.0) scale(0.842 1)" text-anchor="end" font-family="Liberation Sans, sans-serif" font-size="12.4" fill="#1a1a1a">eurcad</text>
<text transform="translate(403.60 476.0) scale(0.781 1)" text-anchor="end" font-family="Liberation Sans, sans-serif" font-size="12.4" fill="#1a1a1a">1.49519</text>
<text transform="translate(484.80 476.0) scale(0.781 1)" text-anchor="end" font-family="Liberation Sans, sans-serif" font-size="12.4" fill="#1a1a1a">1.46702</text>
<text transform="translate(565.80 476.0) scale(0.781 1)" text-anchor="end" font-family="Liberation Sans, sans-serif" font-size="12.4" fill="#1a1a1a">1.58922</text>
<text transform="translate(746.00 476.0) scale(0.789 1)" text-anchor="end" font-family="Liberation Sans, sans-serif" font-size="12.4" fill="#1a1a1a">2017.05.08 00:09:36</text>
<text transform="translate(827.20 476.0) scale(0.781 1)" text-anchor="end" font-family="Liberation Sans, sans-serif" font-size="12.4" fill="#1a1a1a">1.50294</text>
<text transform="translate(908.60 476.0) scale(0.803 1)" text-anchor="end" font-family="Liberation Sans, sans-serif" font-size="12.4" fill="#1a1a1a">0.00</text>
<text transform="translate(1006.20 476.0) scale(0.781 1)" text-anchor="end" font-family="Liberation Sans, sans-serif" font-size="12.4" fill="#1a1a1a">17.02</text>
<rect x="0" y="480.5" width="1009.8" height="18.2" fill="#ffffff"/>
<text transform="translate(94.60 494.0) scale(0.781 1)" text-anchor="end" font-family="Liberation Sans, sans-serif" font-size="12.4" fill="#1a1a1a">2017.05.03 23:26:47</text>
<text transform="translate(176.20 494.0) scale(0.900 1)" text-anchor="end" font-family="Liberation Sans, sans-serif" font-size="12.4" fill="#1a1a1a">sell</text>
<text transform="translate(241.00 494.0) scale(0.803 1)" text-anchor="end" font-family="Liberation Sans, sans-serif" font-size="12.4" fill="#1a1a1a">0.03</text>
<text transform="translate(322.40 494.0) scale(0.842 1)" text-anchor="end" font-family="Liberation Sans, sans-serif" font-size="12.4" fill="#1a1a1a">gold</text>
<text transform="translate(403.60 494.0) scale(0.781 1)" text-anchor="end" font-family="Liberation Sans, sans-serif" font-size="12.4" fill="#1a1a1a">1237.95</text>
<text transform="translate(484.80 494.0) scale(0.781 1)" text-anchor="end" font-family="Liberation Sans, sans-serif" font-size="12.4" fill="#1a1a1a">1276.35</text>
<text transform="translate(565.80 494.0) scale(0.781 1)" text-anchor="end" font-family="Liberation Sans, sans-serif" font-size="12.4" fill="#1a1a1a">1160.88</text>
<text transform="translate(746.00 494.0) scale(0.789 1)" text-anchor="end" font-family="Liberation Sans, sans-serif" font-size="12.4" fill="#1a1a1a">2017.05.08 01:12:12</text>
<text transform="translate(827.20 494.0) scale(0.781 1)" text-anchor="end" font-family="Liberation Sans, sans-serif" font-size="12.4" fill="#1a1a1a">1226.11</text>
<text transform="translate(908.60 494.0) scale(0.803 1)" text-anchor="end" font-family="Liberation Sans, sans-serif" font-size="12.4" fill="#1a1a1a">0.00</text>
<text transform="translate(1006.20 494.0) scale(0.781 1)" text-anchor="end" font-family="Liberation Sans, sans-serif" font-size="12.4" fill="#1a1a1a">35.52</text>
<rect x="0" y="498.5" width="1009.8" height="18.2" fill="#ececec"/>
<rect x="488.4" y="500.1" width="78.8" height="15.6" fill="#60ea60"/>
<text transform="translate(94.60 512.0) scale(0.781 1)" text-anchor="end" font-family="Liberation Sans, sans-serif" font-size="12.4" fill="#1a1a1a">2017.05.08 17:02:07</text>
<text transform="translate(176.20 512.0) scale(0.900 1)" text-anchor="end" font-family="Liberation Sans, sans-serif" font-size="12.4" fill="#1a1a1a">sell</text>
<text transform="translate(241.00 512.0) scale(0.803 1)" text-anchor="end" font-family="Liberation Sans, sans-serif" font-size="12.4" fill="#1a1a1a">0.03</text>
<text transform="translate(322.40 512.0) scale(0.842 1)" text-anchor="end" font-family="Liberation Sans, sans-serif" font-size="12.4" fill="#1a1a1a">audusd</text>
<text transform="translate(403.60 512.0) scale(0.781 1)" text-anchor="end" font-family="Liberation Sans, sans-serif" font-size="12.4" fill="#1a1a1a">0.73860</text>
<text transform="translate(484.80 512.0) scale(0.781 1)" text-anchor="end" font-family="Liberation Sans, sans-serif" font-size="12.4" fill="#1a1a1a">0.74236</text>
<text transform="translate(565.80 512.0) scale(0.781 1)" text-anchor="end" font-family="Liberation Sans, sans-serif" font-size="12.4" fill="#1a1a1a">0.73707</text>
<text transform="translate(746.00 512.0) scale(0.789 1)" text-anchor="end" font-family="Liberation Sans, sans-serif" font-size="12.4" fill="#1a1a1a">2017.05.09 04:32:43</text>
<text transform="translate(827.20 512.0) scale(0.781 1)" text-anchor="end" font-family="Liberation Sans, sans-serif" font-size="12.4" fill="#1a1a1a">0.73697</text>
<text transform="translate(908.60 512.0) scale(0.803 1)" text-anchor="end" font-family="Liberation Sans, sans-serif" font-size="12.4" fill="#1a1a1a">0.00</text>
<text transform="translate(1006.20 512.0) scale(0.781 1)" text-anchor="end" font-family="Liberation Sans, sans-serif" font-size="12.4" fill="#1a1a1a">4.89</text>
<rect x="0" y="516.5" width="1009.8" height="3" fill="#fff"/>
<rect x="488.4" y="517.7" width="78.8" height="2" fill="#60ea60"/>
<rect x="0" y="408.6" width="1009.8" height="1" fill="#c6c6c6"/>
<rect x="0" y="426.6" width="1009.8" height="1" fill="#c6c6c6"/>
<rect x="0" y="444.6" width="1009.8" height="1" fill="#c6c6c6"/>
<rect x="0" y="462.6" width="1009.8" height="1" fill="#c6c6c6"/>
<rect x="0" y="480.6" width="1009.8" height="1" fill="#c6c6c6"/>
<rect x="0" y="498.6" width="1009.8" height="1" fill="#c6c6c6"/>
<rect x="0" y="516.6" width="1009.8" height="1" fill="#c6c6c6"/>
<rect x="97.00" y="369" width="1" height="150" fill="#909090" fill-opacity="0.3"/>
<rect x="178.10" y="369" width="1" height="150" fill="#909090" fill-opacity="0.3"/>
<rect x="243.10" y="369" width="1" height="150" fill="#909090" fill-opacity="0.3"/>
<rect x="324.25" y="369" width="1" height="150" fill="#909090" fill-opacity="0.3"/>
<rect x="405.50" y="369" width="1" height="150" fill="#909090" fill-opacity="0.3"/>
<rect x="487.25" y="369" width="1" height="150" fill="#909090" fill-opacity="0.3"/>
<rect x="568.50" y="369" width="1" height="150" fill="#909090" fill-opacity="0.3"/>
<rect x="748.25" y="369" width="1" height="150" fill="#909090" fill-opacity="0.3"/>
<rect x="829.40" y="369" width="1" height="150" fill="#909090" fill-opacity="0.3"/>
<rect x="910.25" y="369" width="1" height="150" fill="#909090" fill-opacity="0.3"/>
<text transform="translate(94.60 384.2) scale(0.9 1)" text-anchor="end" font-family="DejaVu Sans, sans-serif" font-size="9.4" font-weight="bold" fill="#111">زمن</text>
<text transform="translate(174.60 384.2) scale(0.9 1)" text-anchor="end" font-family="DejaVu Sans, sans-serif" font-size="9.4" font-weight="bold" fill="#111">النوع</text>
<text transform="translate(239.60 384.2) scale(0.9 1)" text-anchor="end" font-family="DejaVu Sans, sans-serif" font-size="9.4" font-weight="bold" fill="#111">الحجم</text>
<text transform="translate(321.00 384.2) scale(0.9 1)" text-anchor="end" font-family="DejaVu Sans, sans-serif" font-size="9.4" font-weight="bold" fill="#111">رمز</text>
<text transform="translate(402.35 384.2) scale(0.9 1)" text-anchor="end" font-family="DejaVu Sans, sans-serif" font-size="9.4" font-weight="bold" fill="#111">سعر</text>
<text transform="translate(483.05 383.8) scale(0.83 1)" text-anchor="end" font-family="Liberation Sans, sans-serif" font-size="11.9" fill="#222">S / L</text>
<text transform="translate(564.70 383.8) scale(0.83 1)" text-anchor="end" font-family="Liberation Sans, sans-serif" font-size="11.9" fill="#222">T / P</text>
<text transform="translate(726.85 384.2) scale(0.9 1)" text-anchor="end" font-family="DejaVu Sans, sans-serif" font-size="9.4" font-weight="bold" fill="#111">زمن</text>
<text transform="translate(825.85 384.2) scale(0.9 1)" text-anchor="end" font-family="DejaVu Sans, sans-serif" font-size="9.4" font-weight="bold" fill="#111">سعر</text>
<text transform="translate(907.60 384.2) scale(0.9 1)" text-anchor="end" font-family="DejaVu Sans, sans-serif" font-size="9.4" font-weight="bold" fill="#111">تبادل</text>
<text transform="translate(1004.10 384.2) scale(0.9 1)" text-anchor="end" font-family="DejaVu Sans, sans-serif" font-size="9.4" font-weight="bold" fill="#111">الربح</text>
<path d="M737.3 383.2L741 377.2" fill="none" stroke="#a8a8a8" stroke-width="0.9"/><path d="M741 377.2L744.6 383.2H737.3" fill="none" stroke="#ffffff" stroke-width="0.9"/>
<rect x="1010" y="369" width="14" height="150" fill="#f0f0f0"/>
<path d="M1014.8 378.8L1017.9 375L1021 378.8Z" fill="#606060"/>
<rect x="1011.6" y="430.6" width="13" height="12" rx="1" fill="url(#gt)" stroke="#8e8e8e" stroke-width="0.9"/>
<path d="M1015 518.2H1020.4L1017.7 521Z" fill="#505050"/>
</svg></body></html>
